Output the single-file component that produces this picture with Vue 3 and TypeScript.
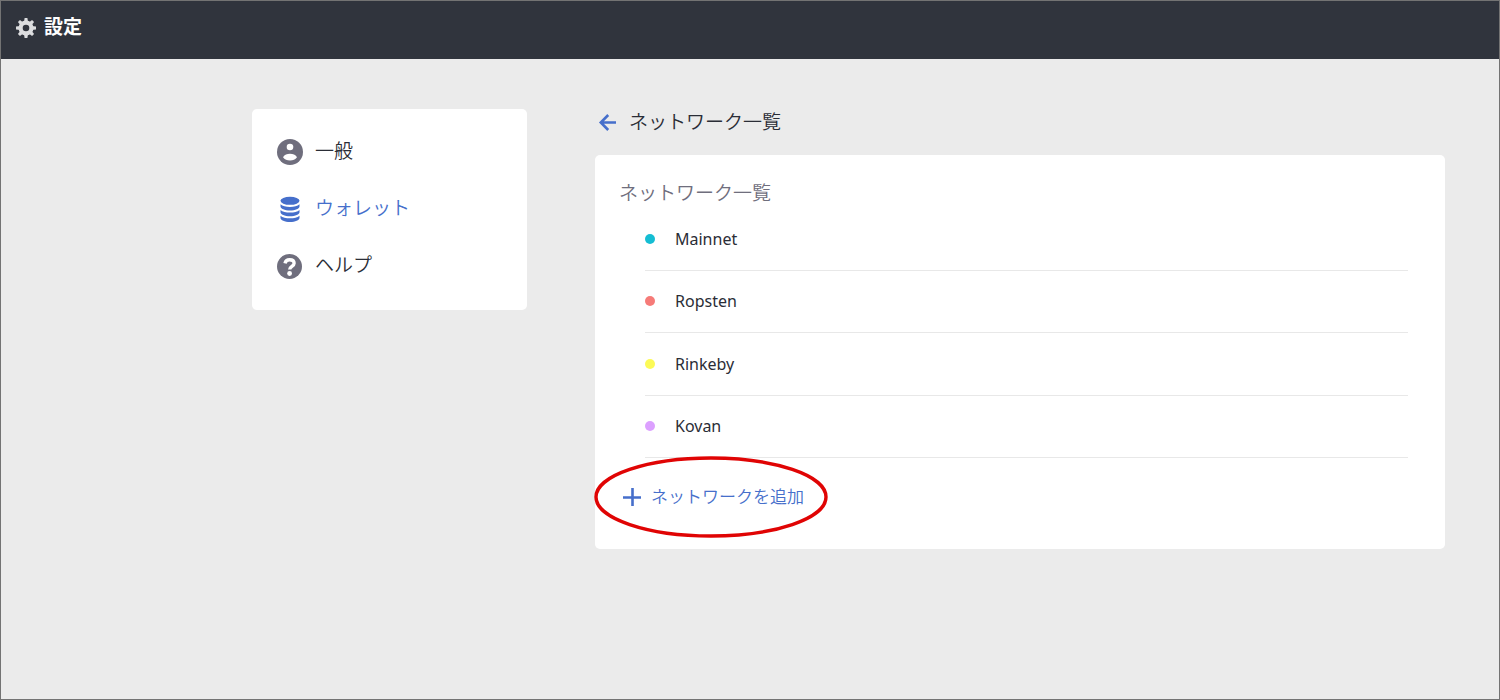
<script setup lang="ts">
interface Network {
  name: string
  tone: string
}

const networks: Network[] = [
  { name: 'Mainnet', tone: 'teal' },
  { name: 'Ropsten', tone: 'coral' },
  { name: 'Rinkeby', tone: 'yellow' },
  { name: 'Kovan', tone: 'violet' },
]
</script>

<template>
  <div class="page">
    <header class="topbar">
      <svg class="gear" viewBox="0 0 20 20" aria-hidden="true">
        <g fill="#dcdddf">
          <path v-for="n in 8" :key="n" d="M8.600 0h2.800l.7 4.500H7.900z" :transform="`rotate(${n * 45} 10 10)`" />
        </g>
        <circle cx="10" cy="10" r="5.400" fill="none" stroke="#dcdddf" stroke-width="4.200" />
      </svg>
      <h1>設定</h1>
    </header>

    <div class="content">
      <nav class="sidebar" aria-label="設定">
        <a href="#general">
          <svg viewBox="0 0 26 26" aria-hidden="true">
            <circle cx="13" cy="13" r="13" fill="#6f6e7d" />
            <circle cx="13" cy="8" r="3.3" fill="#fff" />
            <path d="M6 18.2C7.600 15.500 10 14.700 13 14.700s5.400.8 7 3.500c-1.600 2.200-4 3.200-7 3.200s-5.400-1-7-3.200z" fill="#fff" />
          </svg>
          <span>一般</span>
        </a>
        <a href="#wallet" class="active" aria-current="page">
          <svg viewBox="0 0 26 26" fill="#466fcb" aria-hidden="true">
            <ellipse cx="13" cy="4.800" rx="9.500" ry="4" />
            <path d="M3.500 8.300c2 1.900 5.500 2.600 9.500 2.600s7.500-.7 9.500-2.600v2.200c0 2.200-4.200 4-9.500 4s-9.500-1.800-9.500-4z" />
            <path d="M3.500 14c2 1.900 5.500 2.600 9.500 2.600s7.500-.7 9.500-2.600v2.200c0 2.200-4.200 4-9.500 4s-9.500-1.800-9.500-4z" />
            <path d="M3.500 19.700c2 1.900 5.500 2.600 9.500 2.600s7.500-.7 9.500-2.600v2.200c0 2.200-4.200 4-9.500 4s-9.500-1.800-9.500-4z" />
          </svg>
          <span>ウォレット</span>
        </a>
        <a href="#help">
          <svg viewBox="0 0 26 26" aria-hidden="true">
            <circle cx="12.500" cy="13.500" r="12.500" fill="#6f6e7d" />
            <path d="M8 10.400c.5-2.500 2.200-3.700 4.600-3.700 2.700 0 4.500 1.400 4.500 3.600 0 3.200-4.400 3.100-4.400 6.300" fill="none" stroke="#fff" stroke-width="3.400" />
            <circle cx="12.600" cy="20.500" r="2.400" fill="#fff" />
          </svg>
          <span>ヘルプ</span>
        </a>
      </nav>

      <main>
        <div class="heading">
          <button type="button" class="back" aria-label="戻る">
            <svg viewBox="0 0 18 18" fill="none" stroke="#466fcb" stroke-width="2.600" aria-hidden="true">
              <path d="M18 9.500H3M10.200 2L2.800 9.500l7.400 7.500" />
            </svg>
          </button>
          <h2>ネットワーク一覧</h2>
        </div>

        <section class="card">
          <h3>ネットワーク一覧</h3>
          <ul>
            <li v-for="network in networks" :key="network.name">
              <span class="dot" :class="network.tone"></span>
              <span>{{ network.name }}</span>
            </li>
          </ul>
          <div class="add-row">
            <button type="button" class="add">
              <svg viewBox="0 0 18 18" stroke="#466fcb" stroke-width="2.600" aria-hidden="true">
                <path d="M9.500 0v18M0 9.500h18" />
              </svg>
              <span>ネットワークを追加</span>
            </button>
            <svg class="ring" viewBox="0 0 234 82" aria-hidden="true">
              <ellipse cx="117" cy="41" rx="115" ry="39" fill="none" stroke="#e00404" stroke-width="3.400" />
            </svg>
          </div>
        </section>
      </main>
    </div>
  </div>
</template>

<style>
body {
  background: #ebebeb;
}
</style>

<style scoped>
.page {
  box-sizing: border-box;
  min-height: 100vh;
  border: 1px solid #737373;
  background: #ebebeb;
  color: #2a2d36;
  font-family: "Noto Sans", "Noto Sans CJK JP", sans-serif;
  font-size: 16px;
}

h1,
h2,
h3,
ul {
  margin: 0;
  padding: 0;
}

.topbar {
  box-sizing: border-box;
  display: flex;
  align-items: center;
  gap: 8px;
  height: 58px;
  padding: 0 15px 4px;
  background: #30343d;
  color: #fff;
}

.gear {
  width: 20px;
  height: 20px;
}

h1 {
  padding-bottom: 3px;
  font-size: 19px;
  line-height: 28px;
  font-weight: 700;
}

.content {
  display: grid;
  grid-template-columns: 275px minmax(0, 1fr);
  align-items: start;
  gap: 68px;
  padding: 50px 54px 50px 251px;
}

.sidebar {
  display: flex;
  flex-direction: column;
  gap: 31px;
  padding: 30px 25px 31px;
  border-radius: 5px;
  background: #fff;
}

.sidebar a {
  display: flex;
  align-items: flex-end;
  gap: 12px;
  height: 26px;
  color: #2a2d36;
  font-size: 19px;
  line-height: 28px;
  font-weight: 350;
  text-decoration: none;
}

.sidebar svg {
  width: 26px;
  height: 26px;
}

.sidebar a.active {
  color: #466fcb;
}

.heading {
  display: flex;
  align-items: center;
  gap: 13px;
  height: 26px;
  padding-left: 3px;
  margin-bottom: 20px;
}

button {
  padding: 0;
  border: 0;
  background: none;
  font-family: inherit;
  cursor: pointer;
}

.back {
  display: flex;
}

.back svg,
.add svg {
  width: 18px;
  height: 18px;
}

h2,
h3 {
  font-size: 19px;
  line-height: 28px;
  font-weight: 350;
}

.card {
  padding: 24px 37px 24px 24px;
  border-radius: 5px;
  background: #fff;
}

h3 {
  color: #6f6e7d;
}

ul {
  display: grid;
  grid-template-rows: repeat(4, 1fr);
  height: 250px;
  margin-top: 1px;
  margin-left: 26px;
  list-style: none;
}

li {
  display: flex;
  align-items: center;
  gap: 20px;
  border-bottom: 1px solid #e8e8e8;
}

.dot {
  width: 10px;
  height: 10px;
  border-radius: 50%;
}

.teal {
  background: #15bdd3;
}

.coral {
  background: #f67b78;
}

.yellow {
  background: #fcfa57;
}

.violet {
  background: #dca0ff;
}

.add-row {
  position: relative;
  display: flex;
  padding-top: 25px;
  padding-bottom: 14px;
}

.add {
  display: flex;
  align-items: center;
  gap: 10px;
  padding-left: 4px;
  color: #466fcb;
  font-size: 17px;
  line-height: 28px;
  font-weight: 350;
}

.ring {
  position: absolute;
  top: -2px;
  left: -25px;
  width: 234px;
  height: 82px;
  pointer-events: none;
}
</style>
